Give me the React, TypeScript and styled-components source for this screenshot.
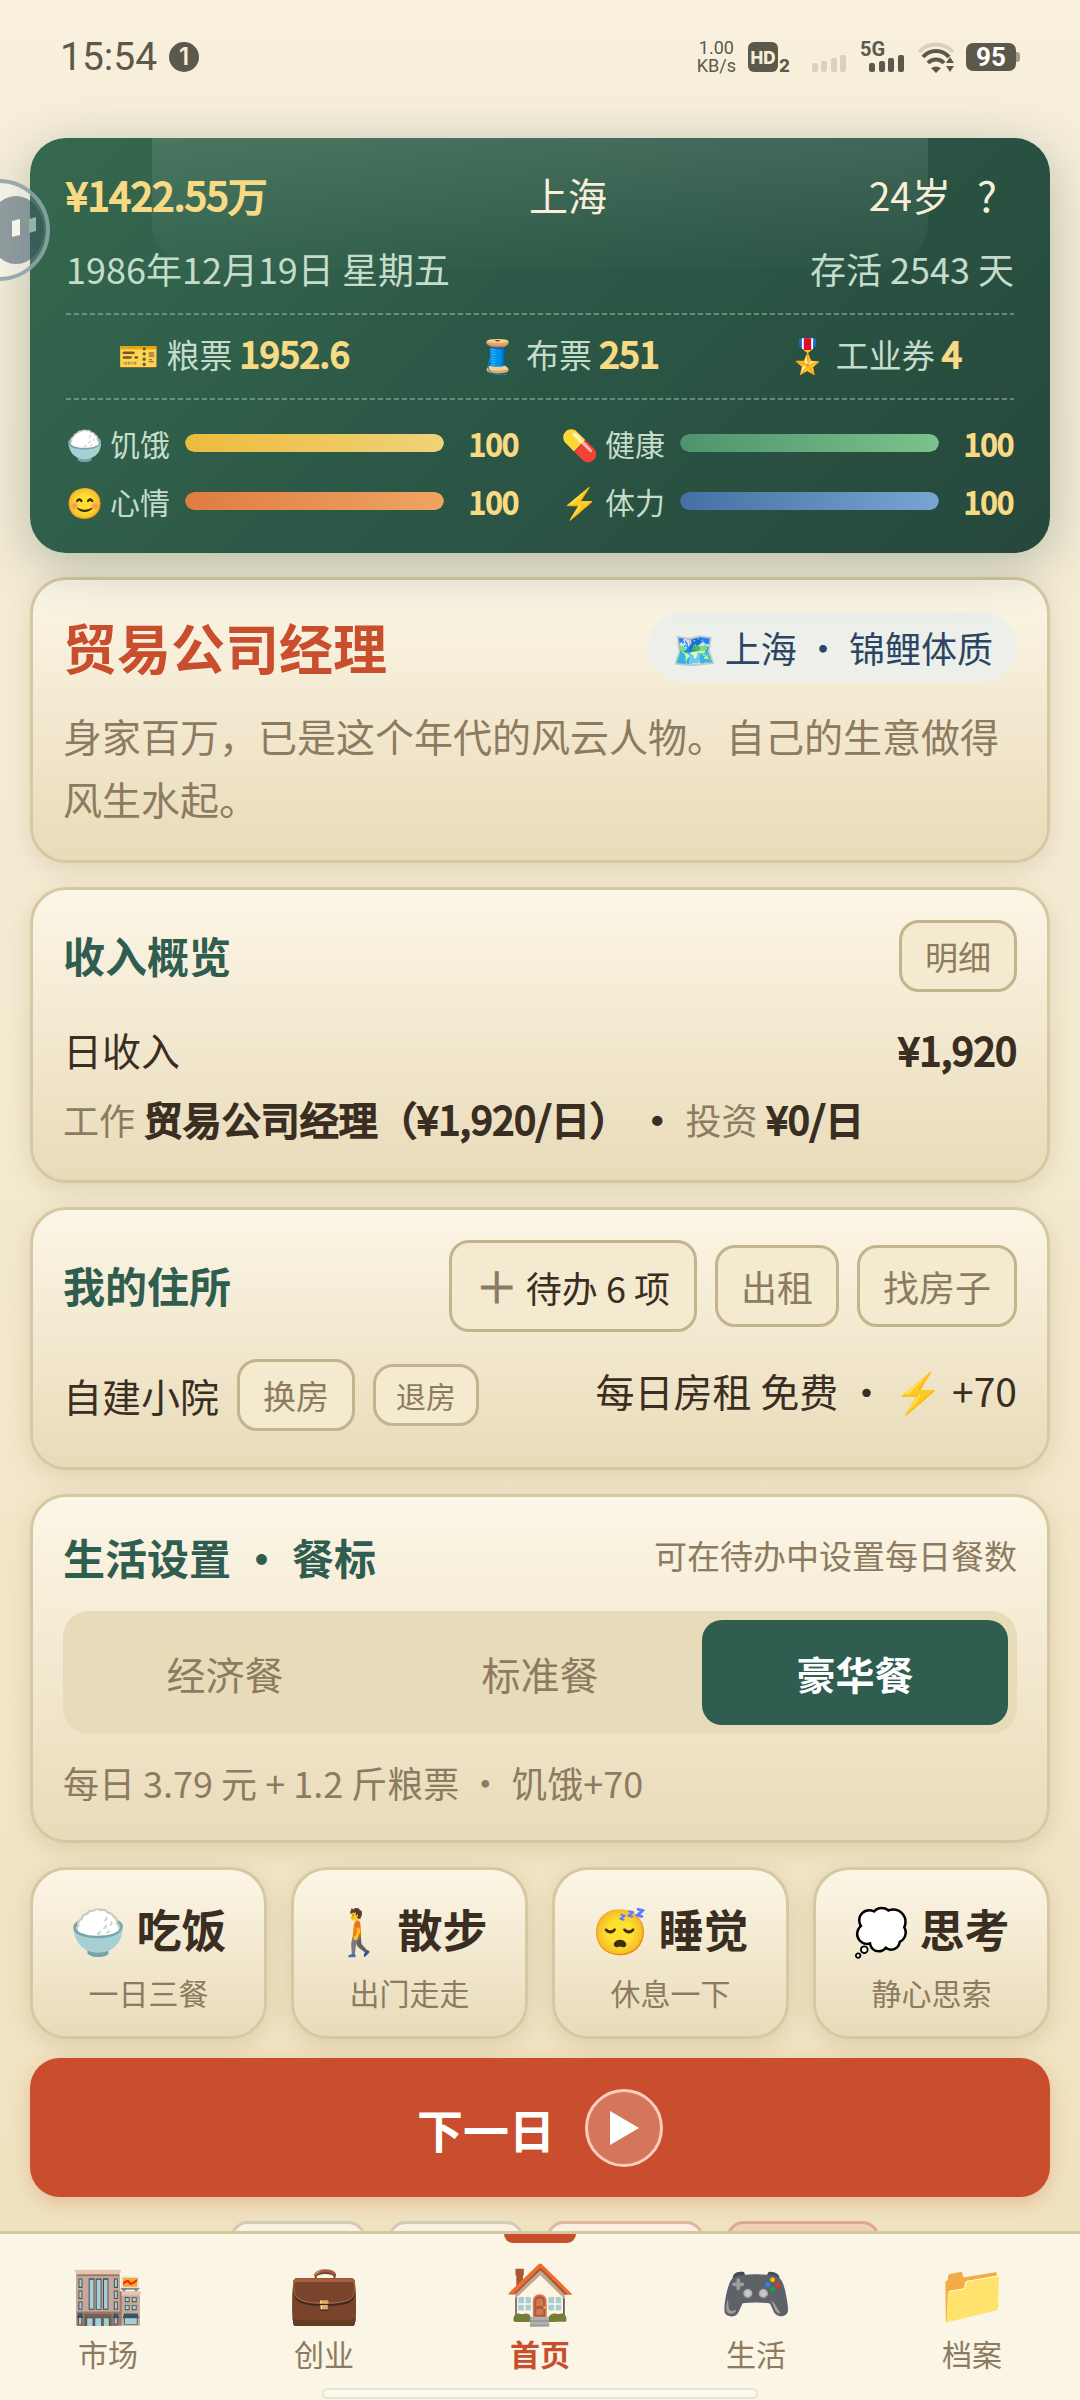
import React, { useState } from 'react';
import styled, { createGlobalStyle, css } from 'styled-components';

const color = {
  ink: '#3a2e22',
  muted: '#8c7b60',
  green: '#2f5d50',
  red: '#c84e2d',
  gold: '#f8da84',
  mint: '#c5dccb',
  cream: '#f8efd6',
  line: '#d6c8a2',
  buttonLine: '#c4b48c',
  status: '#5c584c',
};

const GlobalStyle = createGlobalStyle`
  *, *::before, *::after { box-sizing: border-box; }
  body {
    margin: 0;
    background: #f5ecd2;
    color: ${color.ink};
    font-family: "Noto Sans CJK SC", "Noto Color Emoji", sans-serif;
    font-size: 39px;
    line-height: 62px;
  }
  h1, h2, p { margin: 0; }
  button { font: inherit; color: inherit; margin: 0; padding: 0; border: 0; background: none; cursor: pointer; }
`;

const Page = styled.div`
  min-height: 100vh;
  padding-bottom: 100px;
  background: linear-gradient(180deg, #f8efdc 0%, #f4ead0 45%, #efe1bd 100%);
`;

/* Semi-bold figures: regular widths with a thickened outline. */
const Figure = styled.strong`
  font-weight: 400;
  -webkit-text-stroke: 2px currentColor;
`;

/* ---------- status bar ---------- */

const StatusBar = styled.header`
  display: flex;
  justify-content: space-between;
  align-items: center;
  height: 114px;
  padding: 0 60px;
  color: ${color.status};
  font-family: Inter, "Noto Sans CJK SC", sans-serif;
`;

const StatusSide = styled.div`
  display: flex;
  align-items: center;
  gap: 12px;
`;

const Clock = styled.span`
  font-family: Roboto, sans-serif;
  font-size: 39px;
`;

const Count = styled.span`
  display: grid;
  place-items: center;
  width: 30px;
  height: 30px;
  border-radius: 50%;
  background: ${color.status};
  color: #f7eeda;
  font-size: 24px;
  font-weight: 600;
  line-height: 30px;
`;

const Speed = styled.span`
  display: grid;
  justify-items: center;
  font-family: Roboto, sans-serif;
  font-size: 18px;
  line-height: 18px;
`;

const Main = styled.main`
  display: flex;
  flex-direction: column;
  gap: 24px;
  padding: 24px 30px 0;
`;

/* ---------- summary panel ---------- */

const Summary = styled.section`
  position: relative;
  display: flex;
  flex-direction: column;
  padding: 25px 36px 28px;
  border-radius: 36px;
  background: linear-gradient(135deg, #35694f 0%, #2b5746 50%, #26483c 100%);
  box-shadow: 0 12px 54px rgba(40, 78, 60, 0.32);

  &::before {
    content: '';
    position: absolute;
    top: 0;
    left: 12%;
    right: 12%;
    height: 132px;
    border-radius: 0 0 48px 48px;
    background: linear-gradient(180deg, rgba(255, 255, 255, 0.11), rgba(255, 255, 255, 0.01));
  }
`;

const SummaryRow = styled.div<{ $soft?: boolean }>`
  position: relative;
  display: flex;
  justify-content: space-between;
  align-items: center;
  color: ${(p) => (p.$soft ? color.mint : color.cream)};
  font-size: ${(p) => (p.$soft ? 36 : 39)}px;
  line-height: ${(p) => (p.$soft ? 58 : 62)}px;
  margin-bottom: ${(p) => (p.$soft ? 16 : 14)}px;
`;

const Money = styled(Figure)`
  color: ${color.gold};
`;

const Age = styled.span`
  display: flex;
  align-items: center;
  gap: 21px;
`;

const Help = styled.button`
  && {
    width: 30px;
    margin-right: 12px;
    font-size: 42px;
  }
`;

const Tickets = styled.div`
  display: flex;
  justify-content: space-around;
  gap: 24px;
  padding: 8px 0 15px;
  color: ${color.mint};
  font-size: 33px;
  line-height: 62px;
  background:
    repeating-linear-gradient(90deg, rgba(197, 220, 203, 0.4) 0 5px, transparent 5px 8px) top / 100% 2px no-repeat,
    repeating-linear-gradient(90deg, rgba(197, 220, 203, 0.4) 0 5px, transparent 5px 8px) bottom / 100% 2px no-repeat;

  strong {
    color: ${color.gold};
    font-size: 36px;
  }
`;

const Stats = styled.div`
  display: grid;
  grid-template-columns: 1fr 1fr;
  gap: 10px 42px;
  padding-top: 19px;
  font-size: 30px;
  line-height: 48px;
`;

const Stat = styled.div`
  display: grid;
  grid-template-columns: 107px 1fr 63px;
  gap: 12px;
  align-items: center;
  color: ${color.mint};
  white-space: nowrap;

  strong {
    color: ${color.gold};
    text-align: right;
  }
`;

const Track = styled.div`
  height: 18px;
  border-radius: 9px;
  background: rgba(0, 0, 0, 0.2);
  overflow: hidden;
`;

const Fill = styled.div<{ $from: string; $to: string }>`
  height: 100%;
  border-radius: 9px;
  background: linear-gradient(90deg, ${(p) => p.$from}, ${(p) => p.$to});
`;

/* ---------- cards ---------- */

const paper = css`
  border: 3px solid ${color.line};
  border-radius: 36px;
  background: linear-gradient(180deg, #fcf6e6 0%, #e9dbb9 100%);
  background-clip: padding-box;
  box-shadow: 0 6px 24px rgba(90, 70, 30, 0.14);
`;

const Card = styled.section`
  ${paper}
  display: flex;
  flex-direction: column;
  padding: 30px;
`;

const CardHead = styled.div<{ $gap: number; $top?: boolean }>`
  display: flex;
  justify-content: space-between;
  align-items: ${(p) => (p.$top ? 'flex-start' : 'center')};
  margin-bottom: ${(p) => p.$gap}px;
`;

const JobTitle = styled.h1`
  color: ${color.red};
  font-size: 54px;
  line-height: 74px;
`;

const Pill = styled.span`
  padding: 6px 24px;
  border-radius: 36px;
  background: #edf0ea;
  color: #2b4664;
  font-size: 36px;
  line-height: 58px;
`;

const Muted = styled.p<{ $size?: number }>`
  color: ${color.muted};
  font-size: ${(p) => p.$size ?? 39}px;
  line-height: ${(p) => (p.$size ? 56 : 63)}px;
`;

const Title = styled.h2`
  padding-bottom: 3px;
  color: ${color.green};
  font-size: 42px;
  line-height: 60px;
`;

const Line = styled.div<{ $tall?: boolean }>`
  display: flex;
  justify-content: space-between;
  align-items: flex-start;
  min-height: ${(p) => (p.$tall ? 78 : 62)}px;
`;

const IncomeDetail = styled.p`
  margin-top: 7px;

  span {
    color: ${color.muted};
    font-size: 36px;
  }
`;

const Group = styled.div`
  display: flex;
  align-items: center;
  gap: 18px;
`;

const sizes = {
  small: css`font-size: 30px; line-height: 48px; padding: 4px 20px;`,
  medium: css`font-size: 33px; line-height: 54px; padding: 6px 23px;`,
  large: css`font-size: 36px; line-height: 58px; padding: 9px 23px;`,
  todo: css`font-size: 36px; line-height: 66px; padding: 9px 24px;`,
};

const OutlineButton = styled.button<{ $size: keyof typeof sizes }>`
  && {
    border: 3px solid ${color.buttonLine};
    border-radius: 20px;
    background: #f4ead0;
    color: ${(p) => (p.$size === 'todo' ? color.ink : color.muted)};
    ${(p) => sizes[p.$size]}
  }
`;

const Plus = styled.span`
  color: ${color.muted};
  font-size: 42px;
  -webkit-text-stroke: 1px currentColor;
`;

const Segments = styled.div`
  display: grid;
  grid-template-columns: repeat(3, 1fr);
  gap: 9px;
  margin-bottom: 20px;
  padding: 9px;
  border-radius: 26px;
  background: #e8dbb9;
`;

const Segment = styled.button<{ $active: boolean }>`
  && {
    height: 105px;
    border-radius: 20px;
    background: ${(p) => (p.$active ? color.green : 'transparent')};
    color: ${(p) => (p.$active ? '#ffffff' : color.muted)};
    font-weight: ${(p) => (p.$active ? 700 : 400)};
  }
`;

/* ---------- actions ---------- */

const Actions = styled.div`
  display: grid;
  grid-template-columns: repeat(4, 1fr);
  gap: 24px;
  margin-bottom: -5px;
`;

const ActionButton = styled.button`
  && {
    ${paper}
    display: flex;
    flex-direction: column;
    align-items: center;
    gap: 5px;
    padding: 24px 0 20px;
    white-space: nowrap;
  }

  strong {
    font-size: 45px;
    line-height: 69px;
  }

  span {
    color: ${color.muted};
    font-size: 30px;
    line-height: 48px;
  }
`;

const NextButton = styled.button`
  && {
    display: flex;
    justify-content: center;
    align-items: center;
    gap: 30px;
    height: 139px;
    border-radius: 30px;
    background: ${color.red};
    box-shadow: 0 6px 18px rgba(200, 78, 45, 0.25);
    color: #ffffff;
    font-size: 46px;
    font-weight: 700;
  }
`;

const PlayDisc = styled.span`
  display: grid;
  place-items: center;
  width: 78px;
  height: 78px;
  border: 3px solid #fbcdbb;
  border-radius: 50%;
  background: #d3765c;
`;

const Chips = styled.div`
  display: flex;
  justify-content: center;
  gap: 22px;
  padding-left: 30px;
`;

const Chip = styled.span<{ $w: number; $line: string; $bg: string }>`
  width: ${(p) => p.$w}px;
  height: 60px;
  border: 3px solid ${(p) => p.$line};
  border-radius: 18px;
  background: ${(p) => p.$bg};
`;

/* ---------- bottom navigation ---------- */

const Nav = styled.nav`
  position: fixed;
  left: 0;
  right: 0;
  bottom: 0;
  display: grid;
  grid-template-columns: repeat(5, 1fr);
  height: 169px;
  border-top: 3px solid ${color.line};
  background: #fbf5e6;
`;

const Tab = styled.a<{ $active: boolean }>`
  position: relative;
  display: flex;
  flex-direction: column;
  align-items: center;
  padding-top: 22px;
  color: ${(p) => (p.$active ? color.red : color.muted)};
  font-size: 30px;
  font-weight: ${(p) => (p.$active ? 700 : 400)};
  line-height: 42px;
  text-decoration: none;

  ${(p) =>
    p.$active &&
    css`
      &::before {
        content: '';
        position: absolute;
        top: 0;
        width: 72px;
        height: 9px;
        border-radius: 0 0 9px 9px;
        background: ${color.red};
      }
    `}
`;

const TabIcon = styled.span`
  height: 76px;
  font-family: "Noto Color Emoji", sans-serif;
  font-size: 58px;
  font-weight: 400;
  line-height: 76px;
`;

const HomeIndicator = styled.div`
  position: absolute;
  bottom: 1px;
  left: 322px;
  right: 322px;
  height: 11px;
  border: 2px solid #e8e4d4;
  border-radius: 6px;
  background: #fdfaf0;
`;

const FloatingBall = styled.button`
  && {
    position: fixed;
    top: 179px;
    left: -52px;
    width: 102px;
    height: 102px;
  }

  svg { display: block; }
`;

/* ---------- status icons ---------- */

const StatusIcons = () => (
  <svg width="206" height="46" viewBox="0 -6 206 46" role="img" aria-label="HD 5G Wi-Fi">
    <rect x="0" y="2" width="30" height="30" rx="6" fill={color.status} />
    <text x="15" y="24" textAnchor="middle" fontFamily="Inter" fontSize="17" fontWeight="800" fill="#f7eeda">HD</text>
    <text x="31" y="32" fontFamily="Inter" fontSize="17" fontWeight="800" fill={color.status}>2</text>
    <g fill="#d9d1be">
      <rect x="64" y="23" width="6" height="9" rx="2" />
      <rect x="73" y="21" width="6" height="11" rx="2" />
      <rect x="83" y="18" width="6" height="14" rx="2" />
      <rect x="92" y="15" width="6" height="17" rx="2" />
    </g>
    <text x="112" y="16" fontFamily="Roboto" fontSize="20" fontWeight="700" fill={color.status}>5G</text>
    <g fill={color.status}>
      <rect x="121" y="23" width="6" height="9" rx="2" />
      <rect x="131" y="21" width="6" height="11" rx="2" />
      <rect x="140" y="18" width="6" height="14" rx="2" />
      <rect x="150" y="15" width="6" height="17" rx="2" />
    </g>
    <g fill="none" strokeWidth="4">
      <path d="M171 12 A23 23 0 0 1 205 12" stroke="#d9d1be" />
      <path d="M175 17 A17 17 0 0 1 201 17" stroke={color.status} />
      <path d="M180 23 A11 11 0 0 1 196 23" stroke={color.status} />
    </g>
    <path d="M183 28 Q188 25 193 28 L188 33 Z" fill={color.status} />
    <path d="M202 17 l4 6 h-8 Z M202 32 l4 -6 h-8 Z" fill={color.status} />
  </svg>
);

const Battery = () => (
  <svg width="54" height="28" viewBox="0 0 54 28" role="img" aria-label="95%">
    <rect x="47" y="9" width="7" height="10" rx="3" fill="#a39d8e" />
    <rect x="0" y="0" width="50" height="28" rx="7" fill={color.status} />
    <text x="25" y="23" textAnchor="middle" fontFamily="Roboto" fontSize="26" fontWeight="700" fill="#ffffff">95</text>
  </svg>
);

const stats = [
  { icon: '🍚', label: '饥饿', value: 100, from: '#ebbb3c', to: '#f0d27a' },
  { icon: '💊', label: '健康', value: 100, from: '#4f936d', to: '#7cc28c' },
  { icon: '😊', label: '心情', value: 100, from: '#df7c42', to: '#eea560' },
  { icon: '⚡', label: '体力', value: 100, from: '#4470a4', to: '#78a5d0' },
];

const tickets = [
  { icon: '🎫', label: '粮票', value: '1952.6' },
  { icon: '🧵', label: '布票', value: '251' },
  { icon: '🎖️', label: '工业券', value: '4' },
];

const actions = [
  { icon: '🍚', label: '吃饭', hint: '一日三餐' },
  { icon: '🚶', label: '散步', hint: '出门走走' },
  { icon: '😴', label: '睡觉', hint: '休息一下' },
  { icon: '💭', label: '思考', hint: '静心思索' },
];

const tabs = [
  { icon: '🏬', label: '市场' },
  { icon: '💼', label: '创业' },
  { icon: '🏠', label: '首页' },
  { icon: '🎮', label: '生活' },
  { icon: '📁', label: '档案' },
];

const meals = ['经济餐', '标准餐', '豪华餐'];

export default function App() {
  const [meal, setMeal] = useState('豪华餐');
  const [tab, setTab] = useState('首页');

  return (
    <Page lang="zh-CN">
      <GlobalStyle />
      <StatusBar>
        <StatusSide>
          <Clock>15:54</Clock>
          <Count>1</Count>
        </StatusSide>
        <StatusSide>
          <Speed>
            <span>1.00</span>
            <span>KB/s</span>
          </Speed>
          <StatusIcons />
          <Battery />
        </StatusSide>
      </StatusBar>

      <Main>
        <Summary>
          <SummaryRow>
            <Money>¥1422.55万</Money>
            <span>上海</span>
            <Age>
              24岁
              <Help type="button" aria-label="帮助">?</Help>
            </Age>
          </SummaryRow>
          <SummaryRow $soft>
            <span>1986年12月19日 星期五</span>
            <span>存活 2543 天</span>
          </SummaryRow>
          <Tickets>
            {tickets.map((t) => (
              <span key={t.label}>
                {t.icon} {t.label} <Figure>{t.value}</Figure>
              </span>
            ))}
          </Tickets>
          <Stats>
            {stats.map((s) => (
              <Stat key={s.label}>
                <span>{s.icon} {s.label}</span>
                <Track>
                  <Fill $from={s.from} $to={s.to} style={{ width: `${s.value}%` }} />
                </Track>
                <Figure>{s.value}</Figure>
              </Stat>
            ))}
          </Stats>
        </Summary>

        <Card>
          <CardHead $gap={20}>
            <JobTitle>贸易公司经理</JobTitle>
            <Pill>🗺️ 上海 · 锦鲤体质</Pill>
          </CardHead>
          <Muted>身家百万，已是这个年代的风云人物。自己的生意做得风生水起。</Muted>
        </Card>

        <Card>
          <CardHead $gap={26}>
            <Title>收入概览</Title>
            <OutlineButton type="button" $size="medium">明细</OutlineButton>
          </CardHead>
          <Line>
            <span>日收入</span>
            <Figure>¥1,920</Figure>
          </Line>
          <IncomeDetail>
            <span>工作</span> <Figure>贸易公司经理（¥1,920/日） · </Figure>
            <span>投资</span> <Figure>¥0/日</Figure>
          </IncomeDetail>
        </Card>

        <Card>
          <CardHead $gap={27}>
            <Title>我的住所</Title>
            <Group>
              <OutlineButton type="button" $size="todo"><Plus>＋</Plus> 待办 6 项</OutlineButton>
              <OutlineButton type="button" $size="large">出租</OutlineButton>
              <OutlineButton type="button" $size="large">找房子</OutlineButton>
            </Group>
          </CardHead>
          <Line $tall>
            <Group>
              <span>自建小院</span>
              <OutlineButton type="button" $size="medium">换房</OutlineButton>
              <OutlineButton type="button" $size="small">退房</OutlineButton>
            </Group>
            <span>每日房租 免费 · ⚡ +70</span>
          </Line>
        </Card>

        <Card>
          <CardHead $gap={21} $top>
            <Title>生活设置 · 餐标</Title>
            <Muted $size={33}>可在待办中设置每日餐数</Muted>
          </CardHead>
          <Segments>
            {meals.map((m) => (
              <Segment key={m} type="button" $active={m === meal} onClick={() => setMeal(m)}>
                {m}
              </Segment>
            ))}
          </Segments>
          <Muted $size={36}>每日 3.79 元 + 1.2 斤粮票 · 饥饿+70</Muted>
        </Card>

        <Actions>
          {actions.map((a) => (
            <ActionButton key={a.label} type="button">
              <strong>{a.icon} {a.label}</strong>
              <span>{a.hint}</span>
            </ActionButton>
          ))}
        </Actions>

        <NextButton type="button">
          下一日
          <PlayDisc>
            <svg width="30" height="34" viewBox="0 0 30 34" aria-hidden="true">
              <path d="M1 0 L30 17 L1 34 Z" fill="#ffffff" />
            </svg>
          </PlayDisc>
        </NextButton>

        <Chips>
          <Chip $w={136} $line="#d3cbb6" $bg="#f9f2e0" />
          <Chip $w={136} $line="#d3cbb6" $bg="#f9f2e0" />
          <Chip $w={158} $line="#e2b59c" $bg="#fbf0e0" />
          <Chip $w={154} $line="#dfa98c" $bg="#f0d2b2" />
        </Chips>
      </Main>

      <FloatingBall type="button" aria-label="悬浮助手">
        <svg width="102" height="102" viewBox="0 0 102 102">
          <circle cx="51" cy="51" r="49" fill="#ffffff" fillOpacity="0.1" />
          <path d="M51 2 A49 49 0 0 0 51 100 H82 V2 Z" fill="#ffffff" fillOpacity="0.3" clipPath="circle(49px at 51px 51px)" />
          <circle cx="51" cy="51" r="49" fill="none" stroke="#8fa3a8" strokeOpacity="0.9" strokeWidth="4" />
          <ellipse cx="68" cy="51" rx="28" ry="34" fill="#2a4658" fillOpacity="0.5" />
          <path d="M64 42 L72 40 V56 L64 58 Z" fill="#f5f3ea" />
          <path d="M81 40 L88 38 V52 L81 54 Z" fill="#8fb5a6" />
        </svg>
      </FloatingBall>

      <Nav>
        {tabs.map((t) => (
          <Tab key={t.label} href="#" $active={t.label === tab} onClick={() => setTab(t.label)}>
            <TabIcon>{t.icon}</TabIcon>
            {t.label}
          </Tab>
        ))}
        <HomeIndicator />
      </Nav>
    </Page>
  );
}
